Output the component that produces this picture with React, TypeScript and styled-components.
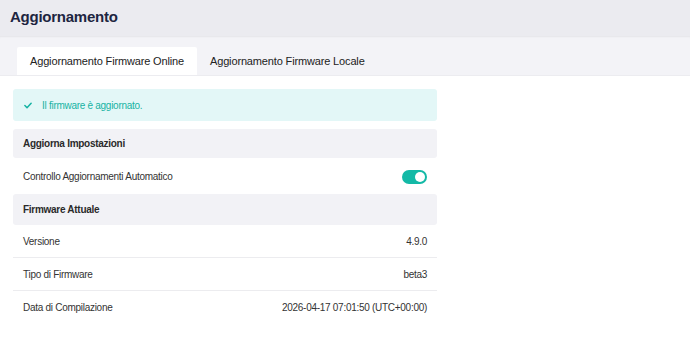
import React, { useState } from 'react';
import styled, { createGlobalStyle } from 'styled-components';

const GlobalStyle = createGlobalStyle`
  html, body {
    margin: 0;
    padding: 0;
    background: #ffffff;
    font-family: 'Liberation Sans', Arial, sans-serif;
  }
`;

const Page = styled.div`
  width: 690px;
  height: 337px;
  overflow: hidden;
  background: #ffffff;
`;

const Header = styled.div`
  height: 36px;
  background: #ebebf0;
  display: flex;
  align-items: center;
  padding: 0 10px;
  box-sizing: border-box;
`;

const Title = styled.h1`
  margin: 0;
  font-size: 15px;
  letter-spacing: -0.25px;
  font-weight: 700;
  color: #1d2541;
  position: relative;
  top: -2px;
`;

const TabBar = styled.div`
  height: 39px;
  background: #f3f3f7;
  display: flex;
  align-items: flex-end;
  padding-left: 17px;
  box-shadow: inset 0 2px 2px -1px rgba(0, 0, 0, 0.06);
  border-bottom: 1px solid #ececf0;
`;

const Tab = styled.button<{ $active?: boolean }>`
  height: 28px;
  padding: 0 13px 1px;
  border: 0;
  border-radius: 2px 2px 0 0;
  background: ${(p) => (p.$active ? '#ffffff' : 'transparent')};
  font-family: inherit;
  font-size: 11px;
  letter-spacing: -0.15px;
  color: #222;
  cursor: pointer;
  display: flex;
  align-items: center;
`;

const Content = styled.div`
  width: 424px;
  margin: 13px 0 0 13px;
  display: flex;
  flex-direction: column;
  font-size: 10px;
  letter-spacing: -0.28px;
`;

const Alert = styled.div`
  height: 32px;
  background: #e3f7f7;
  border-radius: 3px;
  display: flex;
  align-items: center;
  padding-left: 11px;
  gap: 10px;
  color: #16b3a3;
  margin-bottom: 8px;
`;

const SectionHead = styled.div<{ $h?: number }>`
  height: ${(p) => p.$h ?? 29}px;
  background: #f2f2f6;
  border-radius: 3px;
  display: flex;
  align-items: center;
  padding-left: 10px;
  font-weight: 700;
  color: #2a2a2a;
`;

const Row = styled.div<{ $divider?: boolean; $h?: number }>`
  height: ${(p) => p.$h ?? 33}px;
  display: flex;
  align-items: center;
  justify-content: space-between;
  padding: 0 10px;
  color: #333;
  border-bottom: ${(p) => (p.$divider ? '1px solid #ececef' : '0')};
  box-sizing: border-box;
`;

const Switch = styled.button<{ $on: boolean }>`
  width: 25px;
  height: 14px;
  border: 0;
  padding: 0;
  border-radius: 7px;
  background: ${(p) => (p.$on ? '#13b9a6' : '#c9c9d1')};
  position: relative;
  cursor: pointer;
  margin-top: 1px;
`;

const Knob = styled.span<{ $on: boolean }>`
  position: absolute;
  top: 2px;
  left: ${(p) => (p.$on ? '13px' : '2px')};
  width: 10px;
  height: 10px;
  border-radius: 50%;
  background: #fff;
`;

const Check = () => (
  <svg width="8" height="7" viewBox="0 0 9 7">
    <path d="M1 3.6 L3.4 6 L8 1" fill="none" stroke="#16b3a3" strokeWidth="1.7" strokeLinecap="round" strokeLinejoin="round" />
  </svg>
);

const info = [
  { label: 'Versione', value: '4.9.0' },
  { label: 'Tipo di Firmware', value: 'beta3' },
  { label: 'Data di Compilazione', value: '2026-04-17 07:01:50 (UTC+00:00)' },
];

export default function App() {
  const [tab, setTab] = useState(0);
  const [auto, setAuto] = useState(true);

  return (
    <Page>
      <GlobalStyle />
      <Header>
        <Title>Aggiornamento</Title>
      </Header>
      <TabBar>
        <Tab $active={tab === 0} onClick={() => setTab(0)}>Aggiornamento Firmware Online</Tab>
        <Tab $active={tab === 1} onClick={() => setTab(1)}>Aggiornamento Firmware Locale</Tab>
      </TabBar>
      <Content>
        <Alert>
          <Check />
          <span>Il firmware è aggiornato.</span>
        </Alert>
        <SectionHead>Aggiorna Impostazioni</SectionHead>
        <Row $h={36}>
          <span>Controllo Aggiornamenti Automatico</span>
          <Switch $on={auto} onClick={() => setAuto(!auto)}>
            <Knob $on={auto} />
          </Switch>
        </Row>
        <SectionHead $h={31}>Firmware Attuale</SectionHead>
        {info.map((r, i) => (
          <Row key={r.label} $divider={i < info.length - 1}>
            <span>{r.label}</span>
            <span>{r.value}</span>
          </Row>
        ))}
      </Content>
    </Page>
  );
}
